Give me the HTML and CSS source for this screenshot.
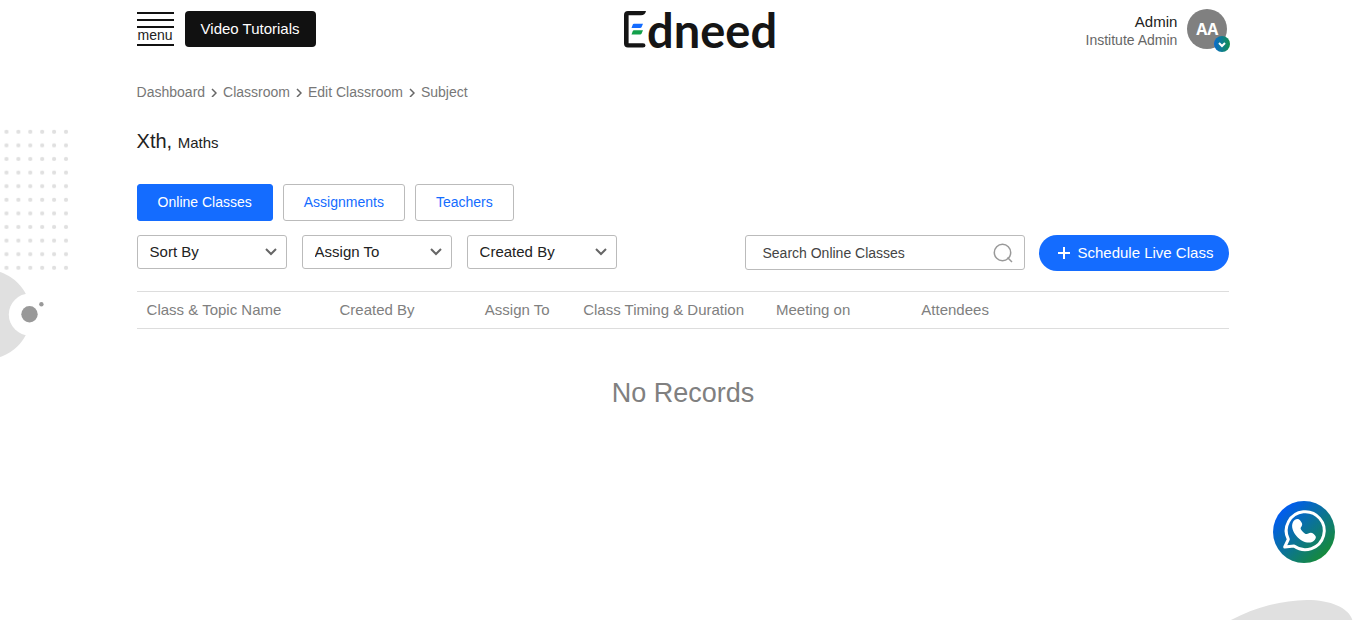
FILE: index.html
```html
<!DOCTYPE html>
<html lang="en">
<head>
<meta charset="utf-8">
<meta name="viewport" content="width=device-width, initial-scale=1">
<title>Edneed</title>
<link rel="stylesheet" href="styles.css">
</head>
<body>
<svg class="decor-left" width="70" height="230" viewBox="0 0 70 230" aria-hidden="true">
  <defs>
    <pattern id="dots" width="11.9" height="13.6" patternUnits="userSpaceOnUse" x="0.5" y="0">
      <circle cx="6" cy="3.8" r="2.1" fill="#e0e0e0"/>
    </pattern>
  </defs>
  <rect width="70" height="143" fill="url(#dots)"/>
  <circle cx="-13.7" cy="186.500" r="44.6" fill="#e0e0e0"/>
  <circle cx="29.8" cy="186.500" r="21" fill="#fff"/>
  <circle cx="29.500" cy="186.300" r="8.2" fill="#999"/>
  <circle cx="41.4" cy="176.200" r="2.2" fill="#999"/>
</svg>
<svg class="decor-right" width="146" height="20" viewBox="0 0 146 20" aria-hidden="true">
  <path d="M10 20.500C37 6 62 1 87 0c24 0 42 8 45.500 20.500z" fill="#e0e0e0"/>
</svg>

<div class="page">
  <header class="header">
    <div class="header-left">
      <button class="menu" type="button">
        <span class="menu-line"></span>
        <span class="menu-line"></span>
        <span class="menu-line"></span>
        <span class="menu-label">menu</span>
        <span class="menu-line"></span>
      </button>
      <button class="tutorials" type="button">Video Tutorials</button>
    </div>
    <a class="logo" href="#" aria-label="Edneed">
      <svg class="logo-mark" width="22" height="37" viewBox="0 0 22 37" aria-hidden="true">
        <path d="M22 0Q21 4.300 17 4.300H4.600V32.300H19Q21.500 32.300 21.500 34.500 21.500 36.500 19 36.500H4Q0 36.500 0 32.500V4Q0 0 4 0z" fill="#151515"/>
        <path d="M10 12.800h9l-1.500 3.400q-.4.800-1.300.8H7.500l1.300-3.400q.3-.8 1.200-.8z" fill="#146cff"/>
        <path d="M10 19.300h9l-1.500 3.400q-.4.800-1.300.8H7.500l1.300-3.400q.3-.8 1.200-.8z" fill="#12a04b"/>
      </svg>
      <span class="logo-text">dneed</span>
    </a>
    <div class="account">
      <div class="account-text">
        <div class="account-name">Admin</div>
        <div class="account-role">Institute Admin</div>
      </div>
      <button class="avatar" type="button" aria-label="Account menu">
        <span>AA</span>
        <svg class="avatar-badge" width="16" height="16" viewBox="0 0 16 16" aria-hidden="true">
          <defs><linearGradient id="badge"><stop stop-color="#0b6bd0"/><stop offset="1" stop-color="#128f4e"/></linearGradient></defs>
          <circle cx="8" cy="8" r="8" fill="url(#badge)"/>
          <path d="M5 7l3 3 3-3" fill="none" stroke="#fff" stroke-width="2"/>
        </svg>
      </button>
    </div>
  </header>

  <main>
    <nav class="breadcrumb" aria-label="Breadcrumb">
      <a href="#">Dashboard</a>
      <svg width="6" height="10" viewBox="0 0 6 10" aria-hidden="true"><path d="M1 2l4 4-4 4"/></svg>
      <a href="#">Classroom</a>
      <svg width="6" height="10" viewBox="0 0 6 10" aria-hidden="true"><path d="M1 2l4 4-4 4"/></svg>
      <a href="#">Edit Classroom</a>
      <svg width="6" height="10" viewBox="0 0 6 10" aria-hidden="true"><path d="M1 2l4 4-4 4"/></svg>
      <span>Subject</span>
    </nav>

    <h1 class="title">Xth, <small>Maths</small></h1>

    <div class="tabs">
      <button class="tab tab-active" type="button">Online Classes</button>
      <button class="tab" type="button">Assignments</button>
      <button class="tab" type="button">Teachers</button>
    </div>

    <div class="toolbar">
      <div class="filters">
        <div class="select">
          <select aria-label="Sort By"><option>Sort By</option></select>
          <svg width="12" height="8" viewBox="0 0 12 8" aria-hidden="true"><path d="M1 1l5 5 5-5"/></svg>
        </div>
        <div class="select">
          <select aria-label="Assign To"><option>Assign To</option></select>
          <svg width="12" height="8" viewBox="0 0 12 8" aria-hidden="true"><path d="M1 1l5 5 5-5"/></svg>
        </div>
        <div class="select">
          <select aria-label="Created By"><option>Created By</option></select>
          <svg width="12" height="8" viewBox="0 0 12 8" aria-hidden="true"><path d="M1 1l5 5 5-5"/></svg>
        </div>
      </div>
      <div class="actions">
        <div class="search">
          <input type="text" placeholder="Search Online Classes" aria-label="Search Online Classes">
          <svg width="20" height="20" viewBox="0 0 20 20" aria-hidden="true"><circle cx="9.500" cy="9.500" r="8.200"/><path d="M14.500 14.500l4.500 4.500"/></svg>
        </div>
        <button class="schedule" type="button">
          <svg width="12" height="12" viewBox="0 0 12 12" aria-hidden="true"><path d="M6 0v12M0 6h12"/></svg>
          <span>Schedule Live Class</span>
        </button>
      </div>
    </div>

    <table class="classes">
      <thead>
        <tr>
          <th class="col-topic">Class &amp; Topic Name</th>
          <th class="col-person">Created By</th>
          <th class="col-assign">Assign To</th>
          <th class="col-topic">Class Timing &amp; Duration</th>
          <th class="col-person">Meeting on</th>
          <th>Attendees</th>
        </tr>
      </thead>
    </table>
    <p class="empty">No Records</p>
  </main>
</div>

<a class="whatsapp" href="#" aria-label="WhatsApp">
  <svg width="62" height="62" viewBox="0 0 62 62" aria-hidden="true">
    <defs><linearGradient id="wa" x1="0.150" y1="0.150" x2="0.850" y2="0.850"><stop stop-color="#005cf0"/><stop offset="1" stop-color="#168a3c"/></linearGradient></defs>
    <circle cx="31" cy="31" r="31" fill="url(#wa)"/>
    <path d="M15.300 38.300A19 19 0 1 1 21 45L11.700 46z" fill="none" stroke="#fff" stroke-width="3" stroke-linejoin="round"/>
    <path d="M20 21c1.600-3 5-3.800 7-1.800 2 2.200 3 4.300 1.500 6.200-1.200 1.600-1.400 2.200.6 4.500 2.200 2.500 4.200 4 6.200 2.700 1.700-1.300 3.600-1.200 5.400.4 2.300 2 3 3.400 1.200 5.700-2.600 3.400-7.500 3.800-12.400 1.300-4.500-2.400-8.300-6.800-9.800-11.400-.9-3-.8-5.400.3-7.600z" fill="#fff"/>
  </svg>
</a>
</body>
</html>
```

FILE: styles.css
```css
* {
  box-sizing: border-box;
}

body {
  margin: 0;
  background: #fff;
  color: #222;
  font-family: "Liberation Sans", Arial, sans-serif;
  font-size: 15px;
  line-height: 18px;
}

button,
input,
select {
  font: inherit;
  color: inherit;
}

button {
  border: 0;
  padding: 0;
  background: none;
  cursor: pointer;
}

a {
  color: inherit;
  text-decoration: none;
}

svg {
  display: block;
}

.decor-left {
  position: absolute;
  top: 128px;
  left: 0;
}

.decor-right {
  position: fixed;
  right: 0;
  bottom: 0;
}

.page {
  position: relative;
  width: 80%;
  margin: 0 auto;
}

.header {
  display: flex;
  justify-content: space-between;
  align-items: flex-start;
  padding-top: 9px;
}

.header-left {
  display: flex;
  gap: 11px;
  padding-top: 2px;
}

.menu {
  display: flex;
  flex-direction: column;
  gap: 5px;
  width: 37px;
  padding-top: 1px;
}

.menu-line {
  width: 100%;
  height: 2px;
  background: #111;
}

.menu-label {
  height: 6px;
  font-size: 14px;
  line-height: 4px;
}

.tutorials {
  height: 36px;
  padding: 0 16px;
  border-radius: 4px;
  background: #111;
  color: #fff;
}

.logo {
  display: flex;
  gap: 1px;
  padding-top: 2px;
}

.logo-mark {
  flex: none;
}

.logo-text {
  color: #151515;
  font-family: Lato, sans-serif;
  font-size: 47px;
  font-weight: 700;
  line-height: 38px;
}

.account {
  display: flex;
  gap: 10px;
  padding-right: 2px;
}

.account-text {
  padding-top: 4px;
  text-align: right;
}

.account-role {
  color: #666;
  font-size: 14px;
}

.avatar {
  position: relative;
  width: 40px;
  height: 40px;
  border-radius: 50%;
  background: #808080;
  color: #fff;
  font-family: "Open Sans", sans-serif;
  font-size: 16px;
  font-weight: 700;
}

.avatar-badge {
  position: absolute;
  right: -3px;
  bottom: -3px;
}

.breadcrumb {
  display: flex;
  align-items: center;
  gap: 6px;
  margin-top: 34px;
  color: #777;
  font-size: 14px;
}

.breadcrumb svg {
  fill: none;
  stroke: #666;
  stroke-width: 1.5;
}

.title {
  margin: 27px 0 0;
  font-size: 20px;
  font-weight: 400;
  line-height: 26px;
}

.title small {
  font-size: 15px;
}

.tabs {
  display: flex;
  gap: 10px;
  margin-top: 28px;
}

.tab {
  height: 37px;
  padding: 0 20px 1px;
  border: 1px solid #bbb;
  border-radius: 3px;
  color: #146cff;
  font-size: 14px;
}

.tab-active {
  border-color: #146cff;
  background: #146cff;
  color: #fff;
}

.toolbar {
  display: flex;
  justify-content: space-between;
  align-items: flex-start;
  margin-top: 14px;
}

.filters {
  display: flex;
  gap: 15px;
}

.select,
.search {
  display: grid;
  align-items: center;
}

.select > *,
.search > * {
  grid-area: 1 / 1;
}

.select select {
  width: 150px;
  height: 34px;
  padding: 0 30px 0 12px;
  border: 1px solid #bbb;
  border-radius: 3px;
  background: #fff;
  appearance: none;
}

.select svg {
  justify-self: end;
  margin-right: 10px;
  fill: none;
  stroke: #666;
  stroke-width: 2;
  pointer-events: none;
}

.actions {
  display: flex;
  gap: 14px;
}

.search input {
  width: 280px;
  height: 35px;
  padding: 0 40px 0 16px;
  border: 1px solid #bbb;
  border-radius: 3px;
  font-size: 14px;
}

.search input::placeholder {
  color: #444;
  opacity: 1;
}

.search {
  align-self: flex-start;
}

.search svg {
  justify-self: end;
  margin-right: 12px;
  fill: none;
  stroke: #999;
  stroke-width: 1.5;
  pointer-events: none;
}

.schedule {
  display: flex;
  align-items: center;
  gap: 7px;
  height: 36px;
  padding: 0 16px 0 19px;
  border-radius: 18px;
  background: #146cff;
  color: #fff;
}

.schedule svg {
  stroke: #fff;
  stroke-width: 2;
}

.classes {
  width: 100%;
  margin-top: 20px;
  border-collapse: collapse;
  border-top: 1px solid #ddd;
  border-bottom: 1px solid #ddd;
  table-layout: fixed;
}

.classes th {
  padding: 9px 10px;
  color: #808080;
  font-weight: 400;
  text-align: left;
  white-space: nowrap;
}

.col-topic {
  width: 17.65%;
}

.col-person {
  width: 13.3%;
}

.col-assign {
  width: 9%;
}

.empty {
  margin: 48px 0 0;
  color: #808080;
  font-size: 27px;
  line-height: 32px;
  text-align: center;
}

.whatsapp {
  position: fixed;
  right: 31px;
  bottom: 57px;
}
```
